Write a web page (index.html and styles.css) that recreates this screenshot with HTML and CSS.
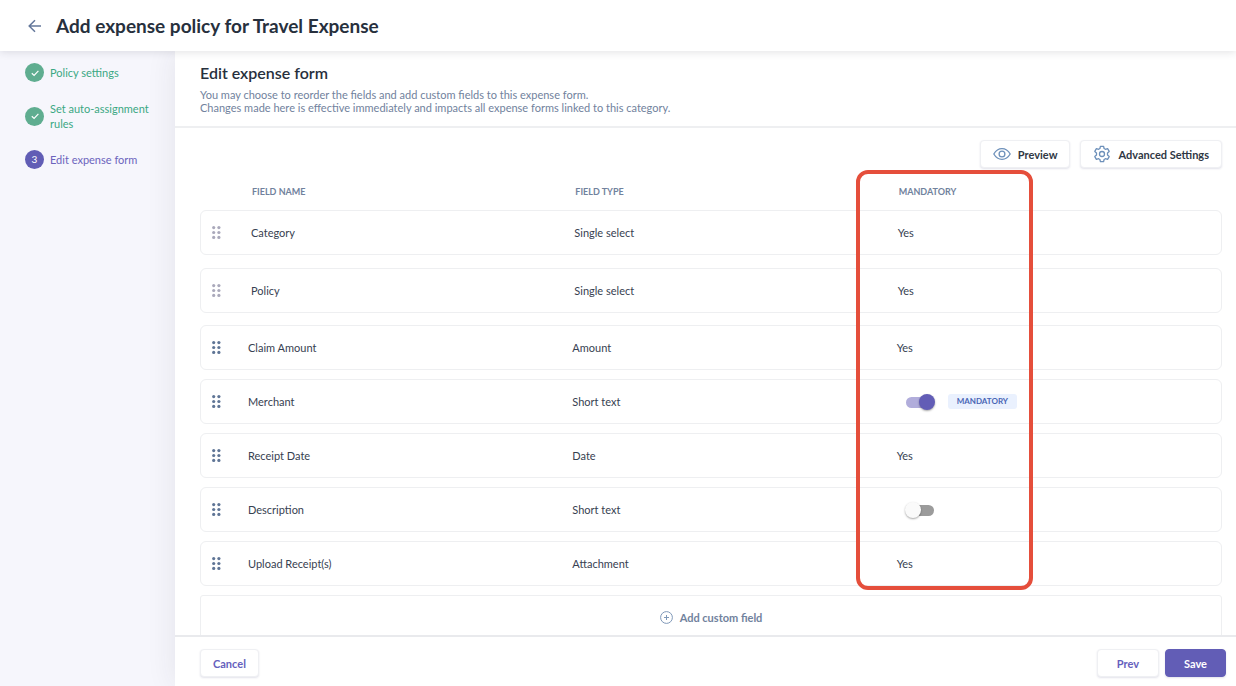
FILE: index.html
```
<!DOCTYPE html>
<html lang="en">
<head>
  <meta charset="utf-8">
  <title>Add expense policy</title>
  <link rel="stylesheet" href="styles.css">
</head>
<body>
  <svg class="sprite" aria-hidden="true">
    <symbol id="grip" viewBox="0 0 9 13">
      <circle cx="1.7" cy="1.6" r="1.6"/><circle cx="6.9" cy="1.6" r="1.6"/>
      <circle cx="1.7" cy="6.5" r="1.6"/><circle cx="6.9" cy="6.5" r="1.6"/>
      <circle cx="1.7" cy="11.4" r="1.6"/><circle cx="6.9" cy="11.4" r="1.6"/>
    </symbol>
    <symbol id="check" viewBox="0 0 10 10">
      <path d="M1.8 5.2l2.3 2.2 4.3-4.5" fill="none" stroke="#fff" stroke-width="1.2"/>
    </symbol>
  </svg>

  <header class="topbar">
    <a class="back" href="#" aria-label="Back">
      <svg width="14" height="14" viewBox="0 0 14 14"><path d="M13 7H1.5M7 1.2L1.2 7 7 12.8"/></svg>
    </a>
    <h1>Add expense policy for Travel Expense</h1>
  </header>

  <div class="layout">
    <nav class="steps">
      <a class="step done" href="#"><span class="dot"><svg width="10" height="10"><use href="#check"/></svg></span>Policy settings</a>
      <a class="step done" href="#"><span class="dot"><svg width="10" height="10"><use href="#check"/></svg></span>Set auto-assignment rules</a>
      <a class="step current" href="#"><span class="dot">3</span>Edit expense form</a>
    </nav>

    <main class="content">
      <div class="intro">
        <h2>Edit expense form</h2>
        <p>You may choose to reorder the fields and add custom fields to this expense form.<br>
        Changes made here is effective immediately and impacts all expense forms linked to this category.</p>
      </div>

      <div class="fields">
        <div class="tools">
          <button class="btn">
            <svg width="18" height="18" viewBox="0 0 18 18"><path d="M.8 9C3 5.300 5.800 3.700 9 3.700S15 5.300 17.200 9C15 12.700 12.200 14.300 9 14.300S3 12.700.8 9z"/><circle cx="9" cy="9" r="2.900"/></svg>
            Preview
          </button>
          <button class="btn">
            <svg width="18" height="18" viewBox="0 0 18 18"><path d="M7.400 1.300h3.200l.5 2.200 1.300.8 2.200-.7 1.600 2.800-1.700 1.500v2.200l1.700 1.500-1.600 2.800-2.200-.7-1.300.8-.5 2.200H7.400l-.5-2.200-1.300-.8-2.200.7-1.600-2.800 1.700-1.500V7.900L1.800 6.400l1.600-2.800 2.200.7 1.300-.8z"/><circle cx="9" cy="9" r="2.500"/></svg>
            Advanced Settings
          </button>
        </div>

        <div class="table-wrap">
          <table>
            <thead>
              <tr><th></th><th>FIELD NAME</th><th>FIELD TYPE</th><th>MANDATORY</th></tr>
            </thead>
            <tbody>
              <tr class="locked"><td><svg class="grip"><use href="#grip"/></svg></td><td>Category</td><td>Single select</td><td>Yes</td></tr>
              <tr class="locked"><td><svg class="grip"><use href="#grip"/></svg></td><td>Policy</td><td>Single select</td><td>Yes</td></tr>
              <tr><td><svg class="grip"><use href="#grip"/></svg></td><td>Claim Amount</td><td>Amount</td><td>Yes</td></tr>
              <tr>
                <td><svg class="grip"><use href="#grip"/></svg></td><td>Merchant</td><td>Short text</td>
                <td><input class="switch" type="checkbox" aria-label="Merchant mandatory" checked><span class="tag">MANDATORY</span></td>
              </tr>
              <tr><td><svg class="grip"><use href="#grip"/></svg></td><td>Receipt Date</td><td>Date</td><td>Yes</td></tr>
              <tr>
                <td><svg class="grip"><use href="#grip"/></svg></td><td>Description</td><td>Short text</td>
                <td><input class="switch" type="checkbox" aria-label="Description mandatory"></td>
              </tr>
              <tr><td><svg class="grip"><use href="#grip"/></svg></td><td>Upload Receipt(s)</td><td>Attachment</td><td>Yes</td></tr>
            </tbody>
          </table>
          <div class="highlight"></div>
        </div>

        <button class="add">
          <svg width="13" height="13" viewBox="0 0 13 13"><circle cx="6.500" cy="6.500" r="5.900"/><path d="M6.500 4v5M4 6.500h5"/></svg>
          Add custom field
        </button>
      </div>

      <footer class="actions">
        <button class="btn link">Cancel</button>
        <button class="btn link prev">Prev</button>
        <button class="btn primary">Save</button>
      </footer>
    </main>
  </div>
</body>
</html>
```
FILE: styles.css
```
* {
  box-sizing: border-box;
}

body {
  display: flex;
  flex-direction: column;
  height: 100vh;
  margin: 0;
  overflow: hidden;
  background: #fff;
  color: #374151;
  font-family: Lato, "Liberation Sans", sans-serif;
  font-size: 11px;
  line-height: 15px;
}

h1, h2, p {
  margin: 0;
}

a {
  text-decoration: none;
}

svg {
  flex: none;
}

.sprite {
  position: absolute;
  width: 0;
  height: 0;
}

.topbar {
  position: relative;
  z-index: 2;
  flex: none;
  display: flex;
  align-items: center;
  gap: 14px;
  height: 51px;
  padding: 0 28px;
  background: #fff;
  box-shadow: 0 1px 8px rgba(40, 40, 60, 0.14);
}

.back {
  display: flex;
}

.back svg {
  fill: none;
  stroke: #64789b;
  stroke-width: 1.5;
}

h1 {
  color: #27303d;
  font-size: 19px;
  font-weight: 700;
  line-height: 24px;
}

.layout {
  flex: 1;
  display: flex;
  min-height: 0;
}

.steps {
  flex: none;
  display: flex;
  flex-direction: column;
  gap: 19px;
  width: 175px;
  padding: 12px 24px 0 25px;
  background: #f6f6fc;
}

.step {
  display: flex;
  align-items: center;
  gap: 6px;
}

.done {
  color: #3aa883;
}

.current {
  color: #6b64bd;
}

.dot {
  flex: none;
  display: flex;
  align-items: center;
  justify-content: center;
  width: 19px;
  height: 19px;
  border-radius: 50%;
  background: #5fad90;
  color: #fff;
  font-size: 10px;
}

.current .dot {
  background: #615db5;
}

.content {
  flex: 1;
  display: flex;
  flex-direction: column;
  min-width: 0;
  background: #fff;
  box-shadow: 0 0 28px rgba(40, 40, 60, 0.09);
}

.intro {
  flex: none;
  padding: 12px 25px;
  border-bottom: 2px solid #eeeff1;
  color: #71829d;
}

.intro p {
  line-height: 13px;
}

h2 {
  margin-bottom: 5px;
  color: #27303d;
  font-size: 16px;
  font-weight: 600;
  line-height: 20px;
}

.fields {
  flex: 1;
  min-height: 0;
  padding: 12px 14px 0 25px;
  overflow: hidden;
}

.tools {
  display: flex;
  justify-content: flex-end;
  gap: 10px;
}

.btn {
  display: flex;
  align-items: center;
  justify-content: center;
  gap: 7px;
  height: 28px;
  padding: 0 12px;
  border: 1px solid #eff0f3;
  border-radius: 4px;
  background: #fff;
  box-shadow: 0 1px 2px rgba(60, 60, 110, 0.14);
  color: #2f3744;
  font: 700 11px/15px Lato, "Liberation Sans", sans-serif;
  cursor: pointer;
}

.btn svg {
  fill: none;
  stroke: #6d90ba;
  stroke-width: 1.3;
  stroke-linejoin: round;
}

.table-wrap {
  position: relative;
}

table,
thead,
tbody {
  display: block;
}

tr {
  display: grid;
  grid-template-columns: 47px repeat(3, 1fr);
  align-items: center;
  height: 45px;
  margin-bottom: 9px;
  border: 1px solid #eeeff1;
  border-radius: 6px;
}

thead tr {
  grid-template-columns: 52px repeat(3, 1fr);
  height: 42px;
  margin: 0;
  border: 0;
}

.locked {
  grid-template-columns: 50px repeat(3, 1fr);
  margin-bottom: 13px;
}

.locked + .locked {
  margin-bottom: 12px;
}

th, td {
  display: flex;
  align-items: center;
  padding: 0;
}

th {
  padding-top: 5px;
  color: #71829d;
  font-size: 9px;
  font-weight: 700;
  text-align: left;
}

.grip {
  width: 9px;
  height: 13px;
  margin-left: 11px;
  fill: #5f7596;
}

.locked .grip {
  fill: #aaa9bb;
}

.switch {
  appearance: none;
  position: relative;
  width: 29px;
  height: 16px;
  margin: 0 0 0 8px;
  cursor: pointer;
}

.switch::before {
  content: '';
  position: absolute;
  top: 3px;
  left: 1px;
  width: 28px;
  height: 11px;
  border-radius: 6px;
  background: #9b9b9b;
}

.switch::after {
  content: '';
  position: absolute;
  top: 0;
  left: 0;
  width: 16px;
  height: 16px;
  border-radius: 50%;
  background: #fafafa;
  box-shadow: 0 1px 2px rgba(0, 0, 0, 0.35);
}

.switch:checked::before {
  background: #b1addb;
}

.switch:checked::after {
  left: 14px;
  background: #625db6;
}

.tag {
  margin-left: 14px;
  padding: 0 9px;
  border-radius: 3px;
  background: #eaf1fe;
  color: #4965b5;
  font-size: 8px;
  font-weight: 700;
}

/* callout round the mandatory column */
.highlight {
  position: absolute;
  top: 2px;
  bottom: -4px;
  left: calc((100% - 52px) * 2 / 3 + 9px);
  width: 177px;
  border: 4px solid #e54e3b;
  border-radius: 12px;
  pointer-events: none;
}

.add {
  display: flex;
  align-items: center;
  justify-content: center;
  gap: 7px;
  width: 100%;
  height: 45px;
  border: 1px solid #eeeff1;
  border-radius: 3px;
  background: #fff;
  color: #71829d;
  font: 700 11px/15px Lato, "Liberation Sans", sans-serif;
  cursor: pointer;
}

.add svg {
  fill: none;
  stroke: #7f98b8;
}

.actions {
  flex: none;
  display: flex;
  align-items: center;
  gap: 6px;
  height: 51px;
  padding: 3px 10px 0 25px;
  border-top: 2px solid #e9eaed;
}

.link {
  color: #6560bd;
}

.prev {
  margin-left: auto;
  padding: 0 19px;
}

.primary {
  padding: 0 18px;
  border-color: #625db6;
  background: #625db6;
  color: #fff;
}
```
